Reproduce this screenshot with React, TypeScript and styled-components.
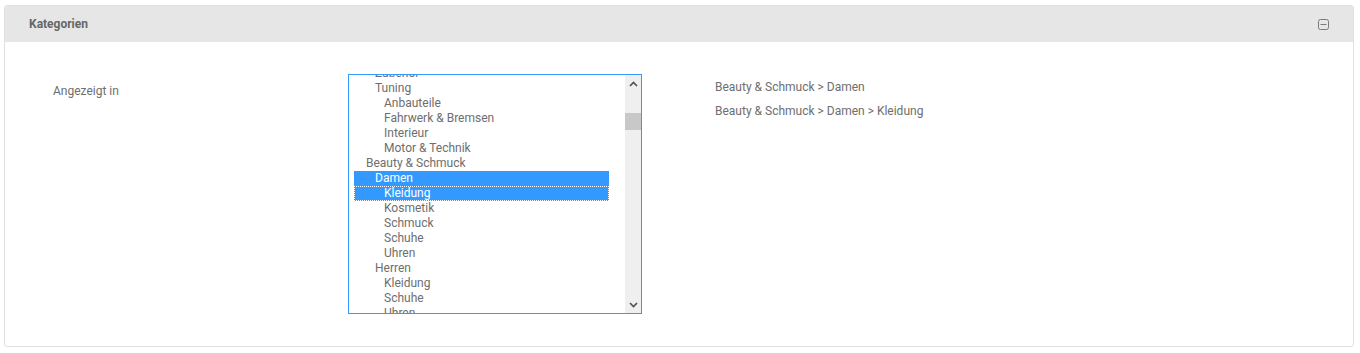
import React from "react";
import styled, { createGlobalStyle } from "styled-components";

const GlobalStyle = createGlobalStyle`
  html, body {
    margin: 0;
    padding: 0;
    background: #fff;
    font-family: Roboto, "Liberation Sans", Arial, sans-serif;
  }
`;

const Page = styled.div`
  padding: 5px 6px 6px 4px;
`;

const Panel = styled.div`
  border: 1px solid #e0e0e0;
  border-radius: 3px;
  background: #fff;
  overflow: hidden;
`;

const PanelHeader = styled.div`
  height: 36px;
  background: #e6e6e6;
  display: flex;
  align-items: center;
  justify-content: space-between;
  padding: 0 23px 0 24px;
`;

const PanelTitle = styled.div`
  font-size: 12px;
  font-weight: bold;
  color: #666;
`;

const ToggleButton = styled.div`
  width: 11px;
  height: 11px;
  display: flex;
  margin-right: 1px;
`;

const PanelBody = styled.div`
  height: 304px;
  padding: 32px 0 0 48px;
  box-sizing: border-box;
  display: grid;
  grid-template-columns: 295px 294px 1fr;
  align-items: start;
  color: #6e6e6e;
  font-size: 12px;
`;

const FieldLabel = styled.div`
  padding-top: 10px;
  line-height: 15px;
`;

const ListBox = styled.div`
  height: 240px;
  border: 1px solid #3399ff;
  box-sizing: border-box;
  display: flex;
  background: #fff;
`;

const ListArea = styled.div`
  flex: 1;
  overflow: hidden;
  padding: 0 16px 0 5px;
`;

const OptionList = styled.div<{ $offset: number }>`
  margin-top: ${(p) => -p.$offset}px;
`;

const Option = styled.div<{ $level: number; $selected?: boolean; $focused?: boolean }>`
  height: 15px;
  line-height: 15px;
  padding-left: ${(p) => 12 + p.$level * 9}px;
  white-space: nowrap;
  color: ${(p) => (p.$selected ? "#fff" : "#6e6e6e")};
  background: ${(p) => (p.$selected ? "#3399ff" : "transparent")};
  outline: ${(p) => (p.$focused ? "1px dotted #fff" : "none")};
  outline-offset: -1px;
`;

const ScrollBar = styled.div`
  width: 16px;
  background: #efefef;
  display: flex;
  flex-direction: column;
`;

const ScrollArrow = styled.div`
  height: 17px;
  display: flex;
  align-items: center;
  justify-content: center;
`;

const ScrollTrack = styled.div`
  flex: 1;
`;

const ScrollThumb = styled.div<{ $top: number; $size: number }>`
  margin-top: ${(p) => p.$top}px;
  height: ${(p) => p.$size}px;
  background: #c8c8c8;
`;

const PathList = styled.div`
  padding: 6px 0 0 73px;
  display: flex;
  flex-direction: column;
  gap: 9px;
  line-height: 15px;
`;

type Item = { label: string; level: number; selected?: boolean; focused?: boolean };

const items: Item[] = [
  { label: "Zubehör", level: 1 },
  { label: "Tuning", level: 1 },
  { label: "Anbauteile", level: 2 },
  { label: "Fahrwerk & Bremsen", level: 2 },
  { label: "Interieur", level: 2 },
  { label: "Motor & Technik", level: 2 },
  { label: "Beauty & Schmuck", level: 0 },
  { label: "Damen", level: 1, selected: true },
  { label: "Kleidung", level: 2, selected: true, focused: true },
  { label: "Kosmetik", level: 2 },
  { label: "Schmuck", level: 2 },
  { label: "Schuhe", level: 2 },
  { label: "Uhren", level: 2 },
  { label: "Herren", level: 1 },
  { label: "Kleidung", level: 2 },
  { label: "Schuhe", level: 2 },
  { label: "Uhren", level: 2 },
];

const paths = ["Beauty & Schmuck > Damen", "Beauty & Schmuck > Damen > Kleidung"];

const Chevron = ({ up }: { up?: boolean }) => (
  <svg width="9" height="6" viewBox="0 0 9 6">
    <path
      d={up ? "M1 5 L4.5 1.5 L8 5" : "M1 1 L4.5 4.5 L8 1"}
      fill="none"
      stroke="#505050"
      strokeWidth="1.6"
    />
  </svg>
);

const App: React.FC = () => {
  return (
    <>
      <GlobalStyle />
      <Page>
        <Panel>
          <PanelHeader>
            <PanelTitle>Kategorien</PanelTitle>
            <ToggleButton>
              <svg width="11" height="11" viewBox="0 0 11 11">
                <rect x="0.5" y="0.5" width="10" height="10" rx="2" fill="none" stroke="#7a7a7a" />
                <line x1="2.5" y1="5.5" x2="8.5" y2="5.5" stroke="#7a7a7a" />
              </svg>
            </ToggleButton>
          </PanelHeader>
          <PanelBody>
            <FieldLabel>Angezeigt in</FieldLabel>
            <ListBox>
              <ListArea>
                <OptionList $offset={9}>
                  {items.map((item, i) => (
                    <Option
                      key={i}
                      $level={item.level}
                      $selected={item.selected}
                      $focused={item.focused}
                    >
                      {item.label}
                    </Option>
                  ))}
                </OptionList>
              </ListArea>
              <ScrollBar>
                <ScrollArrow>
                  <Chevron up />
                </ScrollArrow>
                <ScrollTrack>
                  <ScrollThumb $top={21} $size={17} />
                </ScrollTrack>
                <ScrollArrow>
                  <Chevron />
                </ScrollArrow>
              </ScrollBar>
            </ListBox>
            <PathList>
              {paths.map((p) => (
                <div key={p}>{p}</div>
              ))}
            </PathList>
          </PanelBody>
        </Panel>
      </Page>
    </>
  );
};

export default App;
